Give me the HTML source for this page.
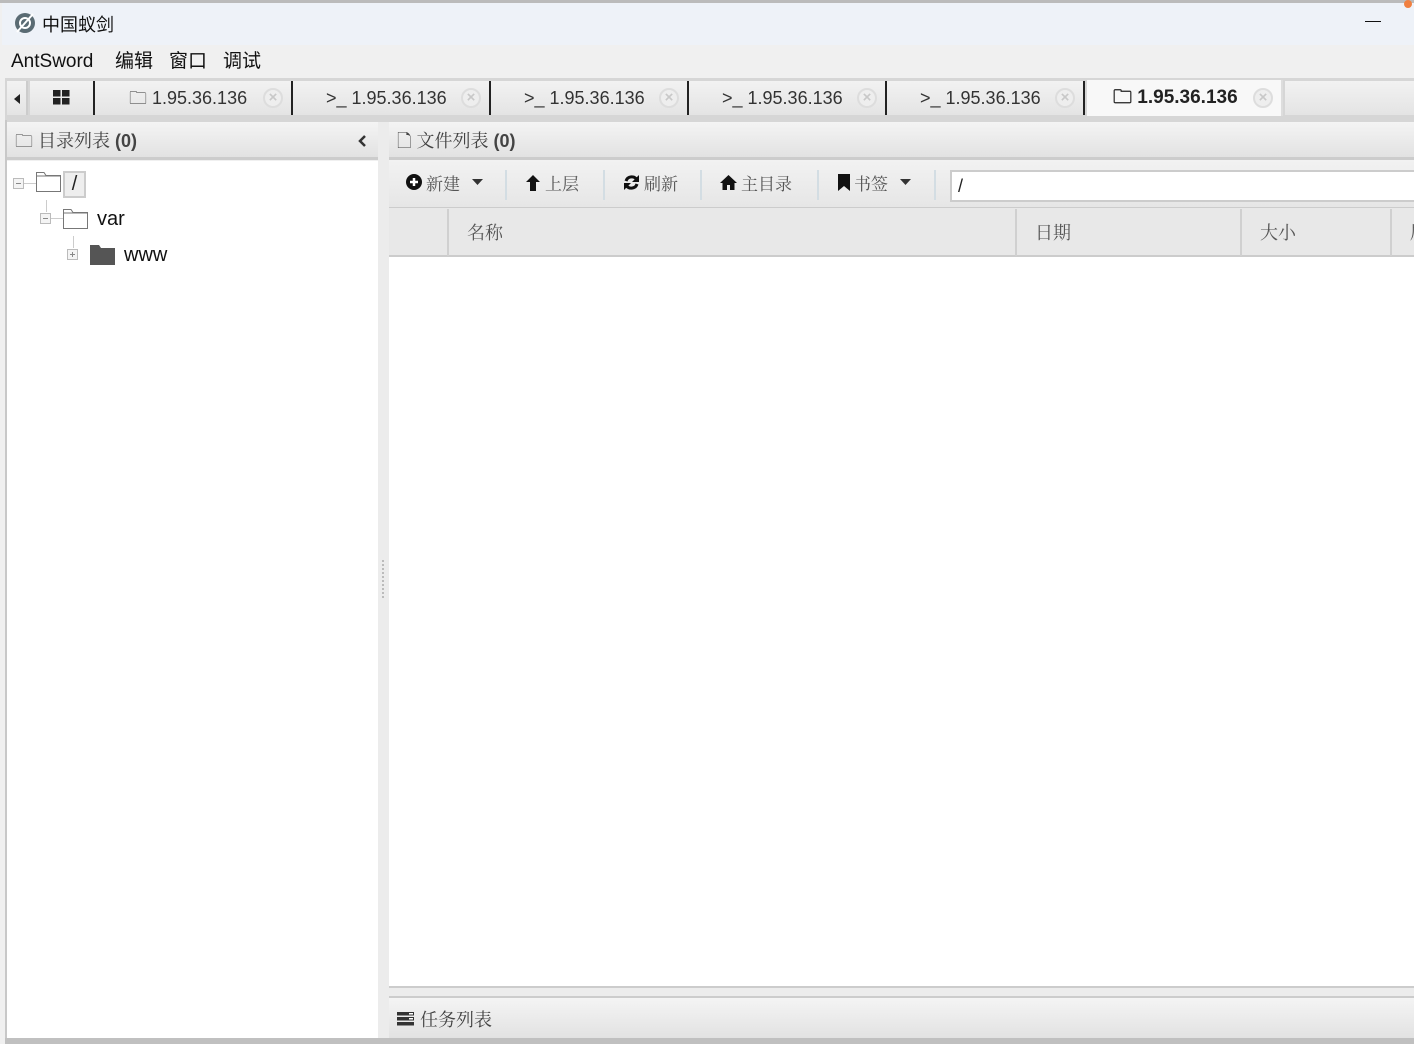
<!DOCTYPE html>
<html><head><meta charset="utf-8"><style>
*{margin:0;padding:0;box-sizing:border-box}
body{width:1414px;height:1044px;background:#f0f0f0;position:relative;overflow:hidden;font-family:"Liberation Sans","Noto Sans CJK SC",sans-serif;color:#222}
.a{position:absolute}
.s{font-family:"Noto Serif CJK SC","Liberation Serif",serif}
.m{position:absolute;top:49px;height:26px;line-height:26px;font-size:19px;color:#111}
.tab{position:absolute;top:81px;height:34px;border-right:2px solid #222;background:linear-gradient(#f2f2f2,#e4e4e4);font-size:18px;color:#333;line-height:34px}
.tab .x{position:absolute;right:8px;top:7px;width:20px;height:20px;border-radius:50%;border:2px solid #ddd;background:#eee;color:#c8c8c8;font-size:15px;line-height:16px;text-align:center;font-weight:bold}
.hdr{background:linear-gradient(#f4f4f4,#e2e2e2);border-bottom:3px solid #ccc}
.tb{position:absolute;top:169px;font-size:17px;color:#555;display:flex;align-items:center;gap:4px;height:26px}
.sep{position:absolute;top:170px;width:2px;height:30px;background:#d3dde3}
.th{position:absolute;top:209px;height:47px;border-right:2px solid #d0d0d0;font-size:18px;color:#555;line-height:47px;padding-left:18px}
</style></head><body>
<div class="a" style="left:0;top:0;width:1414px;height:3px;background:#bbb"></div>
<div class="a" style="left:2px;top:3px;width:1412px;height:42px;background:#eef2f8"></div>
<svg class="a" style="left:13px;top:11px" width="24" height="24"><circle cx="12" cy="12" r="10" fill="#5a6b73"/><circle cx="12" cy="12" r="5" fill="none" stroke="#fff" stroke-width="2"/><line x1="4" y1="21" x2="20" y2="3" stroke="#fff" stroke-width="2"/></svg>
<div class="a" style="left:42px;top:11px;font-size:18px;color:#111">中国蚁剑</div>
<div class="a" style="left:1365px;top:21px;width:16px;height:1px;background:#111"></div>
<div class="a" style="left:1404px;top:0;width:8px;height:8px;border-radius:4px;background:#f08040"></div>
<div class="m" style="left:11px">AntSword</div>
<div class="m" style="left:115px">编辑</div>
<div class="m" style="left:169px">窗口</div>
<div class="m" style="left:223px">调试</div>
<div class="a" style="left:5px;top:78px;width:1409px;height:44px;background:#d6d6d6"></div>
<div class="tab" style="left:7px;width:21px;border-right:2px solid #ccc"><svg class="a" style="left:7px;top:13px" width="6" height="10"><path d="M6 0L0 5L6 10Z" fill="#222"/></svg></div>
<div class="tab" style="left:30px;width:65px"><svg class="a" style="left:23px;top:9px" width="17" height="15"><rect x="0" y="0" width="7.5" height="6.5" fill="#222"/><rect x="9" y="0" width="7.5" height="6.5" fill="#222"/><rect x="0" y="8" width="7.5" height="6.5" fill="#222"/><rect x="9" y="8" width="7.5" height="6.5" fill="#222"/></svg></div>
<div class="tab" style="left:95px;width:198px"><span class="a" style="left:34px">🗀 1.95.36.136</span><span class="x">×</span></div>
<div class="tab" style="left:293px;width:198px"><span class="a" style="left:33px">&gt;_ 1.95.36.136</span><span class="x">×</span></div>
<div class="tab" style="left:491px;width:198px"><span class="a" style="left:33px">&gt;_ 1.95.36.136</span><span class="x">×</span></div>
<div class="tab" style="left:689px;width:198px"><span class="a" style="left:33px">&gt;_ 1.95.36.136</span><span class="x">×</span></div>
<div class="tab" style="left:887px;width:198px"><span class="a" style="left:33px">&gt;_ 1.95.36.136</span><span class="x">×</span></div>
<div class="tab" style="left:1087px;width:196px;background:#f8f8f8;border-right:2px solid #ddd;top:80px;height:36px"><span class="a" style="left:26px;font-weight:bold;color:#222;font-size:19px;top:1px">🗀 1.95.36.136</span><span class="x" style="top:8px">×</span></div>
<div class="tab" style="left:1285px;width:129px;border:none"></div>
<div class="a" style="left:5px;top:120px;width:2px;height:920px;background:#c8c8c8"></div>
<!-- left panel -->
<div class="a hdr" style="left:7px;top:122px;width:371px;height:38px;font-size:18px;line-height:36px;padding-left:8px;color:#444">🗀 <span class="s">目录列表</span> <b>(0)</b><svg class="a" style="right:12px;top:13px" width="8" height="12"><path d="M7 1L2 6L7 11" stroke="#333" stroke-width="2.5" fill="none"/></svg></div>
<div class="a" style="left:7px;top:161px;width:371px;height:878px;background:#fff"></div>
<div class="a" style="left:13px;top:178px;width:11px;height:11px;border:1px solid #bbb;background:#f4f4f4"><div class="a" style="left:2px;top:4px;width:5px;height:1px;background:#888"></div></div>
<div class="a" style="left:24px;top:183px;width:12px;height:1px;background:#ccc"></div>
<svg class="a" style="left:36px;top:172px" width="25" height="20"><path d="M0.5 3.5V0.5H8L10 3.5H24.5V19.5H0.5Z" fill="#fff" stroke="#777"/><line x1="0.5" y1="4" x2="24.5" y2="4" stroke="#777"/></svg>
<div class="a" style="left:63px;top:171px;width:23px;height:27px;border:2px solid #ccc;background:#eee;font-size:20px;text-align:center;line-height:22px">/</div>
<div class="a" style="left:46px;top:200px;width:1px;height:12px;background:#ccc"></div>
<div class="a" style="left:40px;top:213px;width:11px;height:11px;border:1px solid #bbb;background:#f4f4f4"><div class="a" style="left:2px;top:4px;width:5px;height:1px;background:#888"></div></div>
<div class="a" style="left:51px;top:218px;width:12px;height:1px;background:#ccc"></div>
<svg class="a" style="left:63px;top:209px" width="25" height="20"><path d="M0.5 3.5V0.5H8L10 3.5H24.5V19.5H0.5Z" fill="#fff" stroke="#777"/><line x1="0.5" y1="4" x2="24.5" y2="4" stroke="#777"/></svg>
<div class="a" style="left:97px;top:208px;font-size:20px;color:#111">var</div>
<div class="a" style="left:73px;top:236px;width:1px;height:12px;background:#ccc"></div>
<div class="a" style="left:67px;top:249px;width:11px;height:11px;border:1px solid #bbb;background:#f4f4f4"><div class="a" style="left:2px;top:4px;width:5px;height:1px;background:#888"></div><div class="a" style="left:4px;top:2px;width:1px;height:5px;background:#888"></div></div>
<svg class="a" style="left:90px;top:245px" width="25" height="20"><path d="M0 0H9L11 3H25V20H0Z" fill="#555"/></svg>
<div class="a" style="left:124px;top:244px;font-size:20px;color:#111">www</div>
<!-- splitter -->
<div class="a" style="left:378px;top:122px;width:11px;height:918px;background:#ececec"></div>
<div class="a" style="left:382px;top:560px;width:2px;height:38px;border-left:2px dotted #bbb"></div>
<!-- right panel -->
<div class="a hdr" style="left:389px;top:122px;width:1025px;height:38px;font-size:18px;line-height:36px;padding-left:8px;color:#444">🗋 <span class="s">文件列表</span> <b>(0)</b></div>
<div class="a" style="left:389px;top:160px;width:1025px;height:48px;background:linear-gradient(#f2f2f2,#e6e6e6);border-bottom:1px solid #ccc"></div>
<div class="tb s" style="left:406px"><svg width="16" height="16"><circle cx="8" cy="8" r="8" fill="#111"/><path d="M8 4V12M4 8H12" stroke="#fff" stroke-width="2.5"/></svg> 新建 <svg width="12" height="8" style="margin-left:8px"><path d="M0 1H11L5.5 7Z" fill="#333"/></svg></div>
<div class="sep" style="left:505px"></div>
<div class="tb s" style="left:525px"><svg width="16" height="17"><path d="M8 1L1 8H5V17H11V8H15Z" fill="#111"/></svg> 上层</div>
<div class="sep" style="left:603px"></div>
<div class="tb s" style="left:623px"><svg width="17" height="17"><path d="M14 6A6 6 0 0 0 3 7M3 11A6 6 0 0 0 14 10" stroke="#111" stroke-width="3" fill="none"/><path d="M16 1V8H9Z M1 16V9H8Z" fill="#111"/></svg> 刷新</div>
<div class="sep" style="left:700px"></div>
<div class="tb s" style="left:720px"><svg width="17" height="15"><path d="M8.5 0L0 8H2.5V15H7V10H10V15H14.5V8H17Z" fill="#111"/></svg> 主目录</div>
<div class="sep" style="left:817px"></div>
<div class="tb s" style="left:838px"><svg width="12" height="17"><path d="M0 0H12V17L6 12L0 17Z" fill="#111"/></svg> 书签 <svg width="12" height="8" style="margin-left:8px"><path d="M0 1H11L5.5 7Z" fill="#333"/></svg></div>
<div class="sep" style="left:934px"></div>
<div class="a" style="left:950px;top:170px;width:464px;height:32px;background:#fff;border:2px solid #ccc;border-right:none;font-size:18px;line-height:28px;padding-left:6px">/</div>
<div class="a" style="left:389px;top:208px;width:1025px;height:49px;background:#e8e8e8;border-bottom:2px solid #ccc"></div>
<div class="th s" style="left:389px;width:60px"></div>
<div class="th s" style="left:449px;width:568px">名称</div>
<div class="th s" style="left:1017px;width:225px">日期</div>
<div class="th s" style="left:1242px;width:150px">大小</div>
<div class="th s" style="left:1392px;width:30px">属</div>
<div class="a" style="left:389px;top:257px;width:1025px;height:731px;background:#fff;border-bottom:2px solid #ccc"></div>
<div class="a" style="left:389px;top:988px;width:1025px;height:8px;background:#ececec"></div>
<div class="a hdr" style="left:389px;top:996px;width:1025px;height:43px;font-size:18px;line-height:42px;padding-left:8px;color:#444;border-top:2px solid #ccc;border-bottom:none;display:flex;align-items:center;gap:6px"><svg width="17" height="14"><rect y="0" width="17" height="3.5" fill="#333"/><rect y="5" width="17" height="3.5" fill="#333"/><rect y="10" width="17" height="3.5" fill="#333"/><rect x="12" y="1" width="4" height="1.5" fill="#fff"/><rect x="12" y="6" width="4" height="1.5" fill="#fff"/></svg><span class="s">任务列表</span></div>
<div class="a" style="left:5px;top:1038px;width:1409px;height:6px;background:#c0c0c0"></div>
</body></html>
